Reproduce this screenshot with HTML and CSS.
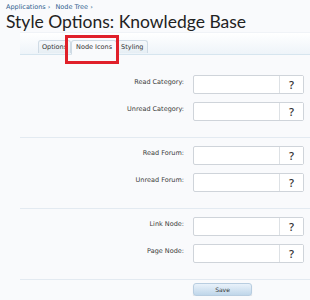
FILE: index.html
```html
<!DOCTYPE html>
<html lang="en">
<head>
    <meta charset="UTF-8">
    <meta name="viewport" content="width=device-width, initial-scale=1.0">
    <title>Style Options: Knowledge Base</title>
    <link rel="stylesheet" href="styles.css">
</head>
<body>
    <div class="crumbs">
        <a href="#">Applications</a> <span class="sep">&rsaquo;</span>
        <a href="#">Node Tree</a> <span class="sep">&rsaquo;</span>
    </div>
    <h1 class="page-title">Style Options: Knowledge Base</h1>

    <div class="tab-strip">
        <ul class="tabs">
            <li class="tab">Options</li>
            <li class="tab active">Node Icons</li>
            <li class="tab">Styling</li>
        </ul>
        <div class="highlight"></div>
    </div>

    <form class="options-form">
        <div class="section">
            <div class="row">
                <label class="row-label">Read Category:</label>
                <div class="field"><input type="text" class="field-input"><button type="button" class="field-help">?</button></div>
            </div>
            <div class="row">
                <label class="row-label">Unread Category:</label>
                <div class="field"><input type="text" class="field-input"><button type="button" class="field-help">?</button></div>
            </div>
        </div>
        <div class="section">
            <div class="row">
                <label class="row-label">Read Forum:</label>
                <div class="field"><input type="text" class="field-input"><button type="button" class="field-help">?</button></div>
            </div>
            <div class="row">
                <label class="row-label">Unread Forum:</label>
                <div class="field"><input type="text" class="field-input"><button type="button" class="field-help">?</button></div>
            </div>
        </div>
        <div class="section">
            <div class="row">
                <label class="row-label">Link Node:</label>
                <div class="field"><input type="text" class="field-input"><button type="button" class="field-help">?</button></div>
            </div>
            <div class="row">
                <label class="row-label">Page Node:</label>
                <div class="field"><input type="text" class="field-input"><button type="button" class="field-help">?</button></div>
            </div>
        </div>
        <div class="submit-row">
            <button type="submit" class="save-button">Save</button>
        </div>
    </form>
</body>
</html>
```

FILE: styles.css
```css
:root {
    --page-bg: #f9fafc;
    --link-color: #2f5f8f;
    --label-color: #3a3a3a;
    --line-color: #e3eaf1;
}

body {
    margin: 0;
    padding: 3px 0 0 6px;
    background: var(--page-bg);
    font-family: "DejaVu Sans", Verdana, sans-serif;
    color: var(--label-color);
    overflow: hidden;
}

.crumbs {
    font-size: 6.5px;
    line-height: 8px;
    height: 8px;
}

.crumbs a {
    color: var(--link-color);
    text-decoration: none;
}

.crumbs .sep {
    color: var(--link-color);
    margin-right: 3px;
}

.page-title {
    margin: 1px 0 0;
    font-family: Lato, "Open Sans", sans-serif;
    font-weight: 400;
    font-size: 17.5px;
    line-height: 20px;
    color: #222;
}

.tab-strip {
    position: relative;
    margin: 0 0 0 14px;
    height: 21px;
    background: linear-gradient(to bottom, #ffffff, #eef4f9);
    border-top: 1px solid #f0f3f7;
    border-bottom: 1px solid #d6e5ef;
    display: flex;
    align-items: flex-end;
}

.tabs {
    list-style: none;
    margin: 0 0 -1px 18px;
    padding: 0;
    display: flex;
}

.tab {
    font-size: 6.5px;
    line-height: 12px;
    height: 12px;
    padding: 0 3px;
    color: #333;
    background: linear-gradient(to bottom, #f6f9fb, #e6eef4);
    border: 1px solid #cfdbe5;
    border-bottom: none;
    border-radius: 3px 3px 0 0;
}

.tab.active {
    background: var(--page-bg);
    height: 13px;
    padding: 0 4px;
    border-bottom: 1px solid var(--page-bg);
}

.highlight {
    position: absolute;
    left: 45px;
    top: 2px;
    width: 48px;
    height: 23px;
    border: 3px solid #e0202a;
}

.options-form {
    margin-left: 14px;
}

.section {
    padding: 20px 0 16px;
    border-bottom: 1px solid var(--line-color);
    display: flex;
    flex-direction: column;
    gap: 8px;
}

.section + .section {
    padding-top: 8px;
}

.row {
    display: flex;
    align-items: flex-start;
}

.row-label {
    width: 164px;
    text-align: right;
    font-size: 6.5px;
    line-height: 8px;
    padding-top: 3px;
}

.field {
    margin-left: 9px;
    width: 111px;
    height: 19px;
    display: flex;
    border: 1px solid #cfd4da;
    border-radius: 2px;
    background: #fff;
    box-sizing: border-box;
}

.field-input {
    flex: 1;
    min-width: 0;
    border: none;
    padding: 0;
    background: transparent;
}

.field-help {
    width: 24px;
    border: none;
    border-left: 1px solid #dde1e5;
    background: #fff;
    padding: 0;
    font-family: "Open Sans", sans-serif;
    font-weight: 600;
    font-size: 11px;
    color: #333;
}

.submit-row {
    padding: 3px 0 0 173px;
}

.save-button {
    display: block;
    width: 59px;
    height: 13px;
    padding: 0;
    border: 1px solid #b8cde0;
    border-radius: 3px;
    background: linear-gradient(to bottom, #e9f2fa, #bfd6ea);
    font-size: 6px;
    line-height: 11px;
    color: #333;
    font-family: "DejaVu Sans", sans-serif;
    box-shadow: 0 1px 1px rgba(0, 0, 0, 0.15);
}
```
